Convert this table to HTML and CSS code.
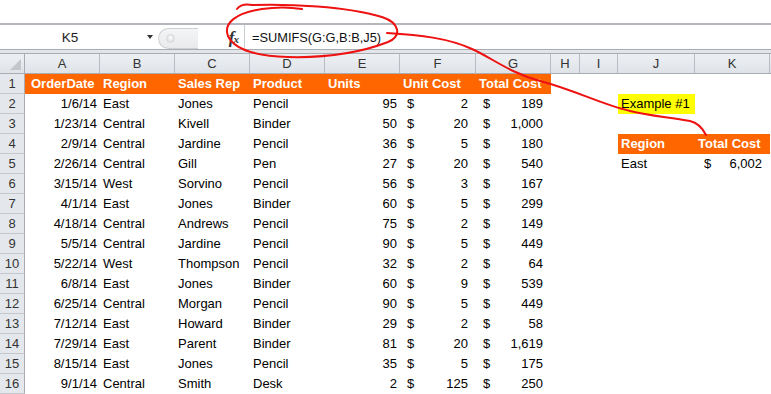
FILE: index.html
```html
<!DOCTYPE html>
<html>
<head>
<meta charset="utf-8">
<link rel="stylesheet" href="styles.css">
</head>
<body>
<div class="app">
  <div class="topband"></div>
  <div class="fbar">
    <div class="namebox"><span class="nb-text">K5</span><span class="nb-arrow"></span></div>
    <div class="mid"><div class="pill"><span class="knob"></span></div><span class="fx"><i>f</i><span class="fxx">x</span></span></div>
    <div class="finput">=SUMIFS(G:G,B:B,J5)</div>
  </div>
  <div class="band"></div>
  <div class="sheet">
    <div class="row colhead">
      <div class="corner"><span class="tri"></span></div>
      <div class="ch">A</div><div class="ch">B</div><div class="ch">C</div><div class="ch">D</div><div class="ch">E</div><div class="ch">F</div><div class="ch">G</div><div class="ch">H</div><div class="ch">I</div><div class="ch">J</div><div class="ch">K</div>
    </div>
    <div class="row">
      <div class="rh">1</div>
      <div class="c hd first">OrderDate</div><div class="c hd">Region</div><div class="c hd">Sales Rep</div><div class="c hd">Product</div><div class="c hd">Units</div><div class="c hd">Unit Cost</div><div class="c hd">Total Cost</div><div class="c"></div><div class="c"></div><div class="c"></div><div class="c"></div>
    </div>
    <div class="row">
      <div class="rh">2</div>
      <div class="c r">1/6/14</div><div class="c">East</div><div class="c">Jones</div><div class="c">Pencil</div><div class="c r">95</div><div class="c acc"><span>$</span><span>2</span></div><div class="c acc"><span>$</span><span>189</span></div><div class="c"></div><div class="c"></div><div class="c yel">Example #1</div><div class="c"></div>
    </div>
    <div class="row">
      <div class="rh">3</div>
      <div class="c r">1/23/14</div><div class="c">Central</div><div class="c">Kivell</div><div class="c">Binder</div><div class="c r">50</div><div class="c acc"><span>$</span><span>20</span></div><div class="c acc"><span>$</span><span>1,000</span></div><div class="c"></div><div class="c"></div><div class="c"></div><div class="c"></div>
    </div>
    <div class="row">
      <div class="rh">4</div>
      <div class="c r">2/9/14</div><div class="c">Central</div><div class="c">Jardine</div><div class="c">Pencil</div><div class="c r">36</div><div class="c acc"><span>$</span><span>5</span></div><div class="c acc"><span>$</span><span>180</span></div><div class="c"></div><div class="c"></div><div class="c hd">Region</div><div class="c hd">Total Cost</div>
    </div>
    <div class="row">
      <div class="rh">5</div>
      <div class="c r">2/26/14</div><div class="c">Central</div><div class="c">Gill</div><div class="c">Pen</div><div class="c r">27</div><div class="c acc"><span>$</span><span>20</span></div><div class="c acc"><span>$</span><span>540</span></div><div class="c"></div><div class="c"></div><div class="c">East</div><div class="c acc k"><span>$</span><span>6,002</span></div>
    </div>
    <div class="row">
      <div class="rh">6</div>
      <div class="c r">3/15/14</div><div class="c">West</div><div class="c">Sorvino</div><div class="c">Pencil</div><div class="c r">56</div><div class="c acc"><span>$</span><span>3</span></div><div class="c acc"><span>$</span><span>167</span></div><div class="c"></div><div class="c"></div><div class="c"></div><div class="c"></div>
    </div>
    <div class="row">
      <div class="rh">7</div>
      <div class="c r">4/1/14</div><div class="c">East</div><div class="c">Jones</div><div class="c">Binder</div><div class="c r">60</div><div class="c acc"><span>$</span><span>5</span></div><div class="c acc"><span>$</span><span>299</span></div><div class="c"></div><div class="c"></div><div class="c"></div><div class="c"></div>
    </div>
    <div class="row">
      <div class="rh">8</div>
      <div class="c r">4/18/14</div><div class="c">Central</div><div class="c">Andrews</div><div class="c">Pencil</div><div class="c r">75</div><div class="c acc"><span>$</span><span>2</span></div><div class="c acc"><span>$</span><span>149</span></div><div class="c"></div><div class="c"></div><div class="c"></div><div class="c"></div>
    </div>
    <div class="row">
      <div class="rh">9</div>
      <div class="c r">5/5/14</div><div class="c">Central</div><div class="c">Jardine</div><div class="c">Pencil</div><div class="c r">90</div><div class="c acc"><span>$</span><span>5</span></div><div class="c acc"><span>$</span><span>449</span></div><div class="c"></div><div class="c"></div><div class="c"></div><div class="c"></div>
    </div>
    <div class="row">
      <div class="rh">10</div>
      <div class="c r">5/22/14</div><div class="c">West</div><div class="c">Thompson</div><div class="c">Pencil</div><div class="c r">32</div><div class="c acc"><span>$</span><span>2</span></div><div class="c acc"><span>$</span><span>64</span></div><div class="c"></div><div class="c"></div><div class="c"></div><div class="c"></div>
    </div>
    <div class="row">
      <div class="rh">11</div>
      <div class="c r">6/8/14</div><div class="c">East</div><div class="c">Jones</div><div class="c">Binder</div><div class="c r">60</div><div class="c acc"><span>$</span><span>9</span></div><div class="c acc"><span>$</span><span>539</span></div><div class="c"></div><div class="c"></div><div class="c"></div><div class="c"></div>
    </div>
    <div class="row">
      <div class="rh">12</div>
      <div class="c r">6/25/14</div><div class="c">Central</div><div class="c">Morgan</div><div class="c">Pencil</div><div class="c r">90</div><div class="c acc"><span>$</span><span>5</span></div><div class="c acc"><span>$</span><span>449</span></div><div class="c"></div><div class="c"></div><div class="c"></div><div class="c"></div>
    </div>
    <div class="row">
      <div class="rh">13</div>
      <div class="c r">7/12/14</div><div class="c">East</div><div class="c">Howard</div><div class="c">Binder</div><div class="c r">29</div><div class="c acc"><span>$</span><span>2</span></div><div class="c acc"><span>$</span><span>58</span></div><div class="c"></div><div class="c"></div><div class="c"></div><div class="c"></div>
    </div>
    <div class="row">
      <div class="rh">14</div>
      <div class="c r">7/29/14</div><div class="c">East</div><div class="c">Parent</div><div class="c">Binder</div><div class="c r">81</div><div class="c acc"><span>$</span><span>20</span></div><div class="c acc"><span>$</span><span>1,619</span></div><div class="c"></div><div class="c"></div><div class="c"></div><div class="c"></div>
    </div>
    <div class="row">
      <div class="rh">15</div>
      <div class="c r">8/15/14</div><div class="c">East</div><div class="c">Jones</div><div class="c">Pencil</div><div class="c r">35</div><div class="c acc"><span>$</span><span>5</span></div><div class="c acc"><span>$</span><span>175</span></div><div class="c"></div><div class="c"></div><div class="c"></div><div class="c"></div>
    </div>
    <div class="row">
      <div class="rh">16</div>
      <div class="c r">9/1/14</div><div class="c">Central</div><div class="c">Smith</div><div class="c">Desk</div><div class="c r">2</div><div class="c acc"><span>$</span><span>125</span></div><div class="c acc"><span>$</span><span>250</span></div><div class="c"></div><div class="c"></div><div class="c"></div><div class="c"></div>
    </div>
  </div>
  <svg class="ink" width="771" height="394" viewBox="0 0 771 394">
    <path d="M 237 9 C 240 5, 246 4, 252 5 C 290 4, 345 6, 382 17 C 400 23, 402 36, 388 42 C 362 52, 326 58, 288 57 C 256 56, 234 49, 228 36 C 223 23, 236 13, 262 9 C 275 7, 290 7, 302 9"/>
    <path d="M 387 33 C 420 35, 448 38, 472 49 C 492 58, 510 73, 540 81 C 575 90, 600 104, 630 111 C 650 116, 668 117, 690 121 C 699 123, 703 129, 706 135"/>
  </svg>
</div>
</body>
</html>
```

FILE: styles.css
```css
* { box-sizing: border-box; }
html, body { margin: 0; padding: 0; background: #fff; }
.app {
  position: relative;
  width: 771px;
  height: 394px;
  overflow: hidden;
  font-family: "Liberation Sans", Arial, sans-serif;
  font-size: 13px;
  color: #000;
}
.topband { height: 23px; background: #fff; }
.fbar {
  display: flex;
  height: 27px;
  border-top: 2px solid #b3b7bd;
  border-bottom: 1px solid #a9adb3;
  background: #fff;
}
.namebox {
  width: 158px;
  display: flex;
  align-items: center;
  position: relative;
}
.nb-text {
  width: 140px;
  text-align: center;
  font-size: 13.5px;
  color: #222;
}
.nb-arrow {
  margin-left: 7px;
  width: 0; height: 0;
  border-left: 3.5px solid transparent;
  border-right: 3.5px solid transparent;
  border-top: 4px solid #333;
}
.mid {
  width: 87px;
  display: flex;
  align-items: center;
  justify-content: space-between;
  padding-right: 5px;
  border-right: 1px solid #c9ccd1;
}
.pill {
  width: 40px;
  height: 21px;
  margin-top: 2px;
  border: 1px solid #cdd0d4;
  border-right: none;
  border-radius: 11px 0 0 11px;
  background: linear-gradient(#f4f5f6, #e9eaec);
  display: flex;
  align-items: center;
  padding-left: 7px;
}
.knob {
  width: 9px; height: 9px;
  border-radius: 50%;
  background: radial-gradient(circle at 50% 40%, #fff, #cfd1d4);
  border: 1px solid #d8dadd;
}
.fx {
  font-family: "Liberation Serif", serif;
  font-size: 17px;
  color: #333;
  line-height: 1;
  display: flex;
  align-items: flex-end;
}
.fx i { font-style: italic; font-weight: bold; }
.fxx { font-size: 11px; font-style: italic; font-weight: bold; margin-left: -1px; margin-bottom: 1px; }
.finput {
  flex: 1;
  display: flex;
  align-items: center;
  padding-left: 7px;
  font-size: 12.8px;
  color: #111;
}
.band { height: 3px; background: #e3e5e8; }
.sheet { display: flex; flex-direction: column; }
.row {
  display: grid;
  grid-template-columns: 25px 75px 75px 75px 75px 75px 76px 75px 29px 38px 77px 75px;
  height: 20px;
  line-height: 20px;
}
.colhead {
  height: 21px;
  line-height: 19px;
  border-top: 1px solid #a9adb3;
  border-bottom: 1px solid #a9adb3;
  background: linear-gradient(#edf0f3, #dfe3e8);
}
.corner {
  border-right: 1px solid #a9adb3;
  position: relative;
}
.tri {
  position: absolute;
  right: 3px; bottom: 3px;
  width: 0; height: 0;
  border-left: 11px solid transparent;
  border-bottom: 11px solid #c3c7cc;
}
.ch {
  text-align: center;
  border-right: 1px solid #b9bdc3;
  color: #333;
  font-size: 13px;
}
.rh {
  text-align: center;
  background: #e4e7eb;
  border-right: 1px solid #a9adb3;
  border-bottom: 1px solid #c4c8cd;
  color: #333;
  font-size: 13px;
  line-height: 19px;
}
.c {
  padding: 0 3px;
  white-space: nowrap;
  overflow: visible;
}
.c.r { text-align: right; }
.hd {
  background: #ff6600;
  color: #fff;
  font-weight: bold;
}
.hd.first { padding-left: 6px; }
.acc {
  display: flex;
  justify-content: space-between;
  padding: 0 8px 0 7px;
}
.acc.k { padding-left: 9px; }
.yel { background: #ffff00; }
.ink {
  position: absolute;
  left: 0; top: 0;
  pointer-events: none;
}
.ink path {
  fill: none;
  stroke: #ee1111;
  stroke-width: 2;
  stroke-linecap: round;
  stroke-linejoin: round;
}
```
